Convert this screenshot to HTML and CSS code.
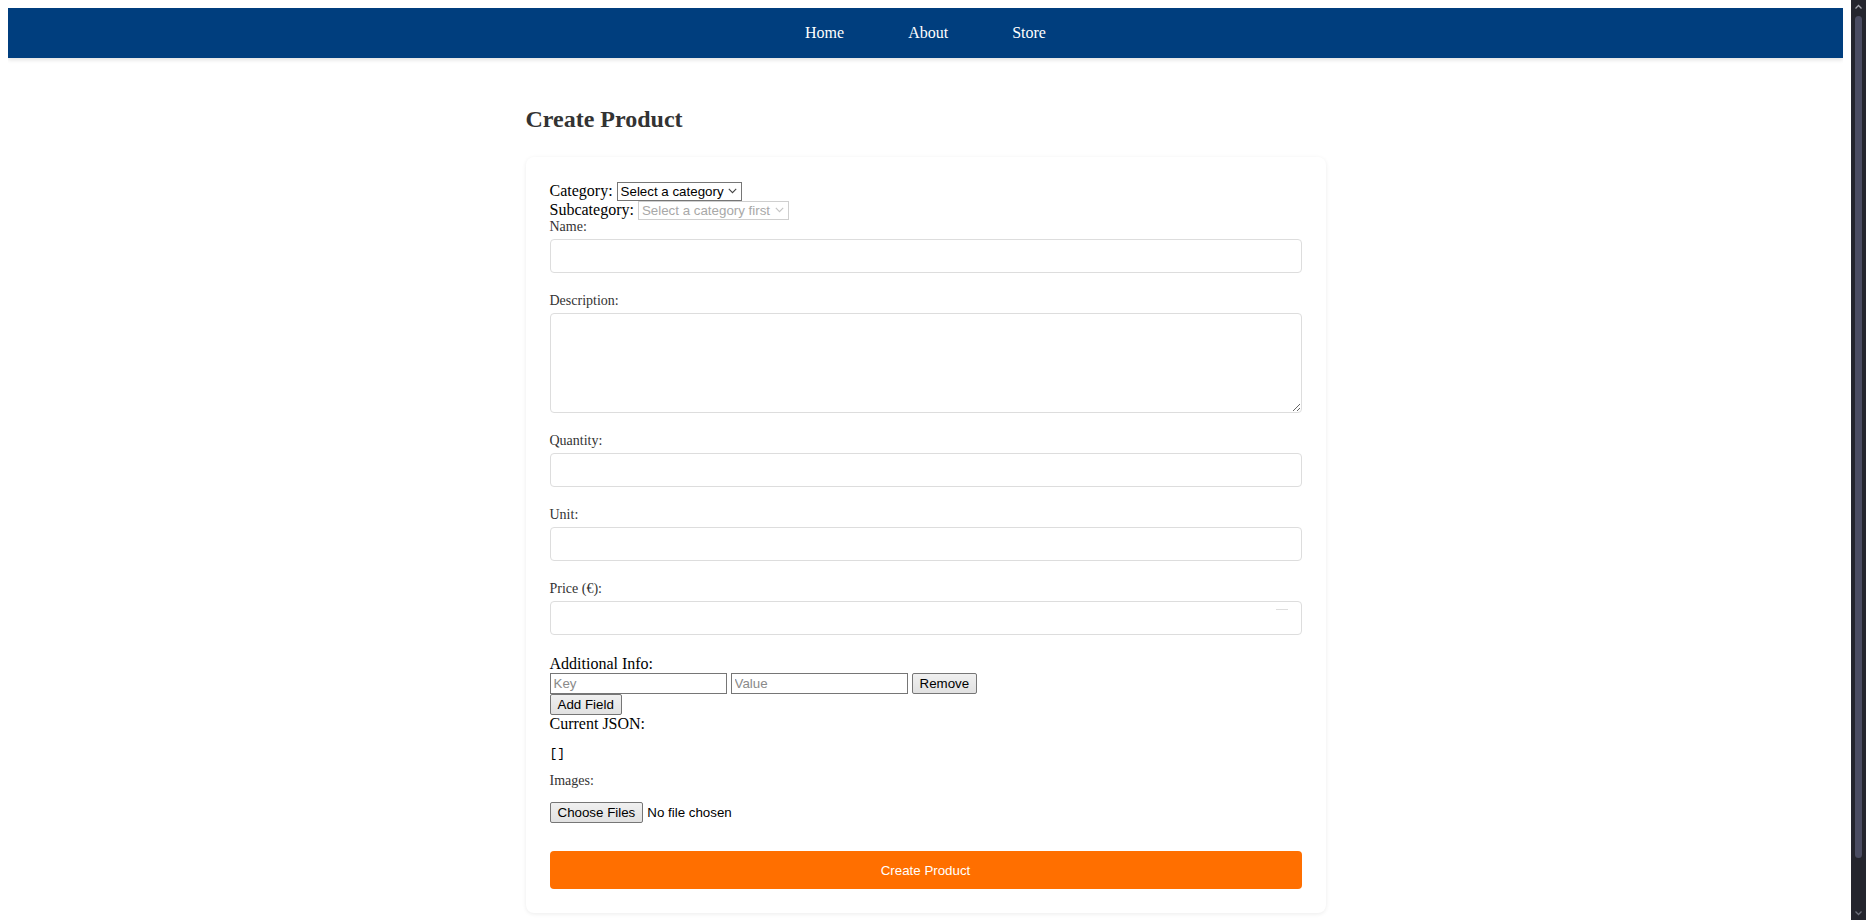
FILE: index.html
```html
<!DOCTYPE html>
<html lang="en">
<head>
<meta charset="utf-8">
<title>Create Product</title>
<link rel="stylesheet" href="styles.css">
</head>
<body>
<nav class="navbar">
  <a class="nav-link" href="#">Home</a>
  <a class="nav-link" href="#">About</a>
  <a class="nav-link" href="#">Store</a>
</nav>
<main class="container">
  <h2 class="title">Create Product</h2>
  <form class="card">
    <div class="inline-field"><label class="plain-label">Category:</label> <span class="select-wrap"><select class="native-select"><option>Select a category</option></select><svg class="chev" width="9" height="6" viewBox="0 0 9 6"><path d="M0.8 0.8 L4.5 4.6 L8.2 0.8" fill="none" stroke="#444" stroke-width="1.1"/></svg></span></div>
    <div class="inline-field"><label class="plain-label">Subcategory:</label> <span class="select-wrap"><select class="native-select" disabled><option>Select a category first</option></select><svg class="chev" width="9" height="6" viewBox="0 0 9 6"><path d="M0.8 0.8 L4.5 4.6 L8.2 0.8" fill="none" stroke="#c4c4c4" stroke-width="1.1"/></svg></span></div>

    <div class="form-group">
      <label class="form-label">Name:</label>
      <input class="text-input" type="text">
    </div>
    <div class="form-group">
      <label class="form-label">Description:</label>
      <textarea class="text-input text-area"></textarea>
    </div>
    <div class="form-group">
      <label class="form-label">Quantity:</label>
      <input class="text-input" type="text">
    </div>
    <div class="form-group">
      <label class="form-label">Unit:</label>
      <input class="text-input" type="text">
    </div>
    <div class="form-group">
      <label class="form-label">Price (€):</label>
      <div class="price-wrap"><input class="text-input" type="text"></div>
    </div>

    <div class="additional">
      <div class="section-label">Additional Info:</div>
      <div class="kv-row"><input class="kv-input" type="text" placeholder="Key"> <input class="kv-input" type="text" placeholder="Value"> <button type="button" class="plain-btn">Remove</button></div>
      <button type="button" class="plain-btn add-btn">Add Field</button>
      <div class="section-label">Current JSON:</div>
      <pre class="json">[]</pre>
    </div>

    <div class="form-group files">
      <label class="form-label">Images:</label>
      <input class="file-input" type="file" multiple>
    </div>

    <button type="button" class="submit-btn">Create Product</button>
  </form>
</main>
<div class="fake-scrollbar" aria-hidden="true">
  <svg class="sb-arrow" width="15" height="14" viewBox="0 0 15 14"><path d="M4.5 8.5 L7.5 5.5 L10.5 8.5" fill="none" stroke="#a3a4ad" stroke-width="1.3"/></svg>
  <div class="sb-thumb"></div>
  <svg class="sb-arrow" width="15" height="14" viewBox="0 0 15 14"><path d="M4.5 5.5 L7.5 8.5 L10.5 5.5" fill="none" stroke="#6c6e7a" stroke-width="1.3"/></svg>
</div>
</body>
</html>
```
FILE: styles.css
```css
html {
  background: #ffffff;
}

body {
  margin: 8px 23px 8px 8px;
  font-family: "Liberation Serif", "Times New Roman", serif;
  font-size: 16px;
  color: #000;
}

.fake-scrollbar {
  position: fixed;
  top: 0;
  right: 0;
  width: 15px;
  height: 100vh;
  background: #24252e;
  display: flex;
  flex-direction: column;
  align-items: center;
}
.sb-arrow {
  flex: none;
  display: block;
}
.sb-thumb {
  flex: 1;
  width: 7px;
  margin: 2px 0 48px;
  border-radius: 4px;
  background: #4a4c62;
}

.navbar {
  display: flex;
  justify-content: center;
  align-items: center;
  gap: 64px;
  height: 50px;
  background: #003e7e;
  box-shadow: 0 2px 4px rgba(0, 0, 0, 0.12);
}

.nav-link {
  color: #ffffff;
  text-decoration: none;
  font-size: 16px;
}

.container {
  max-width: 800px;
  margin: 0 auto;
  padding: 47px 0 50px;
}

.title {
  margin: 0 0 24px;
  font-size: 24px;
  line-height: 28px;
  font-weight: bold;
  color: #333333;
}

.card {
  background: #ffffff;
  border-radius: 8px;
  padding: 24px;
  box-shadow: 0 1px 4px rgba(0, 0, 0, 0.08);
}

.inline-field {
  height: 19px;
  line-height: 19px;
}

.plain-label {
  color: #000;
}

.select-wrap {
  position: relative;
  display: inline-block;
  vertical-align: baseline;
}

.native-select {
  -webkit-appearance: none;
  appearance: none;
  box-sizing: border-box;
  font-family: "Liberation Sans", Arial, sans-serif;
  font-size: 13.333px;
  height: 19px;
  padding: 0 17px 0 3px;
  border: 1px solid #767676;
  border-radius: 0;
  background: #ffffff;
  color: #000;
  vertical-align: baseline;
  margin: 0;
}
.native-select:disabled {
  color: #a8a8a8;
  border-color: #cfcfcf;
  opacity: 1;
}

.chev {
  position: absolute;
  right: 5px;
  top: 7px;
  pointer-events: none;
}

.form-group {
  margin-bottom: 20px;
}

.form-label {
  display: block;
  font-size: 14px;
  line-height: 15px;
  color: #333333;
  margin-bottom: 5px;
}

.text-input {
  display: block;
  width: 100%;
  box-sizing: border-box;
  height: 34px;
  padding: 8px;
  font-family: "Liberation Sans", Arial, sans-serif;
  font-size: 14px;
  border: 1px solid #dddddd;
  border-radius: 4px;
  background: #fff;
  margin: 0;
}

.text-area {
  height: 100px;
  resize: vertical;
}

.price-wrap {
  position: relative;
}
.price-wrap::after {
  content: "";
  position: absolute;
  right: 14px;
  top: 8px;
  width: 12px;
  height: 1px;
  background: #dedede;
}

.section-label {
  font-size: 16px;
  line-height: 18px;
  color: #000;
}

.kv-row {
  height: 21px;
  line-height: 21px;
  font-size: 16px;
}

.kv-input {
  box-sizing: border-box;
  width: 177px;
  height: 21px;
  padding: 0 3px;
  border: 1px solid #767676;
  border-radius: 0;
  font-family: "Liberation Sans", Arial, sans-serif;
  font-size: 13.333px;
  vertical-align: top;
  margin: 0;
}
.kv-input::placeholder {
  color: #8a8a8a;
}

.plain-btn {
  box-sizing: border-box;
  height: 21px;
  padding: 0 7px;
  border: 1px solid #767676;
  border-radius: 2px;
  background: linear-gradient(#f0f0f0, #e1e1e1);
  font-family: "Liberation Sans", Arial, sans-serif;
  font-size: 13.333px;
  color: #000;
  white-space: nowrap;
  vertical-align: top;
  margin: 0;
}

.add-btn {
  display: block;
  width: max-content;
}

.json {
  font-family: "Liberation Mono", "Courier New", monospace;
  font-size: 13px;
  line-height: 15px;
  margin: 13px 0 12px;
}

.files .form-label {
  margin-bottom: 14px;
}

.file-input {
  display: block;
  font-family: "Liberation Sans", Arial, sans-serif;
  font-size: 13.333px;
  height: 21px;
  margin: 0;
}
.file-input::file-selector-button {
  box-sizing: border-box;
  height: 21px;
  padding: 0 7px;
  border: 1px solid #767676;
  border-radius: 2px;
  background: linear-gradient(#f0f0f0, #e1e1e1);
  font-family: "Liberation Sans", Arial, sans-serif;
  font-size: 13.333px;
  margin-right: 4px;
}

.submit-btn {
  display: block;
  width: 100%;
  height: 38px;
  margin-top: 28px;
  border: none;
  border-radius: 4px;
  background: #ff6f00;
  color: #ffffff;
  font-family: "Liberation Sans", Arial, sans-serif;
  font-size: 13.333px;
}
```
